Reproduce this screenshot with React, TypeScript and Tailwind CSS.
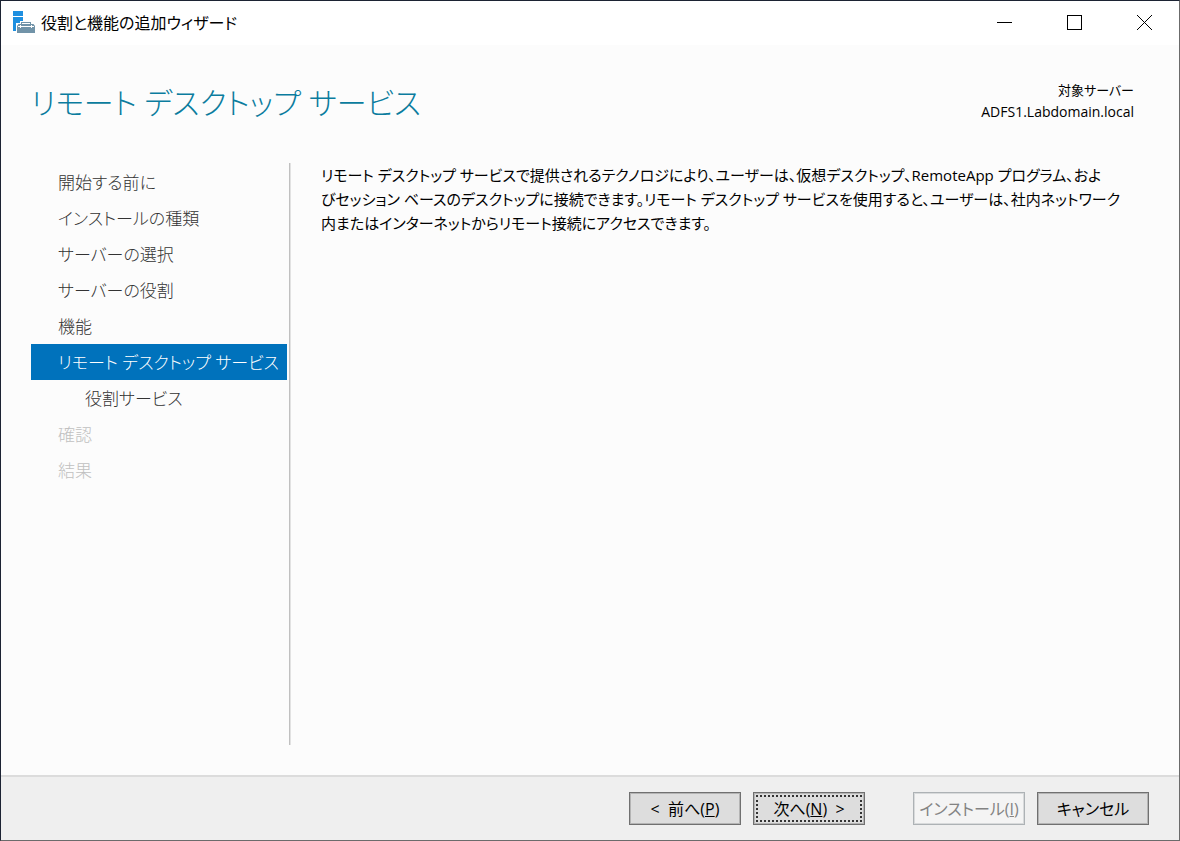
import type { ReactNode } from "react";

const steps = [
  { label: "開始する前に", style: "pl-[27px] text-[#333333]" },
  { label: "インストールの種類", style: "pl-[27px] text-[#333333]" },
  { label: "サーバーの選択", style: "pl-[27px] text-[#333333]" },
  { label: "サーバーの役割", style: "pl-[27px] text-[#333333]" },
  { label: "機能", style: "pl-[27px] text-[#333333]" },
  { label: "リモート デスクトップ サービス", style: "pl-[27px] bg-[#0072bc] text-white", current: true },
  { label: "役割サービス", style: "pl-[54px] text-[#333333]" },
  { label: "確認", style: "pl-[27px] text-[#c0c0c0]", disabled: true },
  { label: "結果", style: "pl-[27px] text-[#c0c0c0]", disabled: true },
];

function ServerIcon() {
  return (
    <svg width="24" height="24" viewBox="0 0 24 24" aria-hidden="true">
      <path fill="#1e8fe0" d="M1 0h10v5H1zM1 6h10v4H8v2H4v8H1z" />
      <path fill="#7193a8" d="M9 11h10v2h-1v-1h-8v1H9zM6.5 13h15L23 15v7H5v-7z" />
      <path fill="none" stroke="#fff" d="M6 15.5h16M8.5 14v3M19.5 14v3" />
    </svg>
  );
}

function FooterButton({ children, disabled, focused }: { children: ReactNode; disabled?: boolean; focused?: boolean }) {
  return (
    <button
      type="button"
      disabled={disabled}
      className="h-[33px] w-28 border border-[#707070] bg-[#dddddd] p-[2px] text-base text-black shadow-[inset_0_0_0_1px_#b4b4b4] disabled:border-[#adb2b5] disabled:bg-[#f4f4f4] disabled:text-[#838383] disabled:shadow-[inset_0_0_0_1px_#d8dadb]"
    >
      <span
        className={
          focused
            ? "flex h-full items-center justify-center border-2 border-dotted border-[#333333] whitespace-pre"
            : "flex h-full items-center justify-center whitespace-pre"
        }
      >
        {children}
      </span>
    </button>
  );
}

export default function App() {
  return (
    <div className="flex min-h-screen flex-col border border-t-[#1c2333] border-r-[#6b6b6b] border-b-[#6b6b6b] border-l-[#1c2333] bg-[#fcfcfc] font-['Open_Sans','Noto_Sans_CJK_JP',sans-serif] text-black [font-feature-settings:'palt']">
      <header className="flex h-11 shrink-0 items-center bg-white pl-[11px]">
        <ServerIcon />
        <span className="ml-[5px] text-base">役割と機能の追加ウィザード</span>
        <div className="ml-auto flex h-full pb-px">
          <button type="button" aria-label="最小化" className="flex w-[70px] items-center justify-center">
            <svg width="15" height="15" viewBox="0 0 15 15" shapeRendering="crispEdges">
              <path d="M0 7.5h15" stroke="black" />
            </svg>
          </button>
          <button type="button" aria-label="最大化" className="flex w-[70px] items-center justify-center">
            <svg width="15" height="15" viewBox="0 0 15 15" shapeRendering="crispEdges">
              <rect x="0.5" y="0.5" width="14" height="14" fill="none" stroke="black" />
            </svg>
          </button>
          <button type="button" aria-label="閉じる" className="flex w-[70px] items-center justify-center">
            <svg width="15" height="15" viewBox="0 0 15 15">
              <path d="M0 0l15 15M15 0L0 15" stroke="black" />
            </svg>
          </button>
        </div>
      </header>

      <div className="flex items-start justify-between pt-[34px] pr-[45px] pl-[30px]">
        <h1 className="text-[30px] leading-[48px] font-light text-[#0b7c9e]">リモート デスクトップ サービス</h1>
        <div className="pt-px text-right leading-[21px]">
          <p className="text-[13px]">対象サーバー</p>
          <p className="text-sm leading-[21px]">ADFS1.Labdomain.local</p>
        </div>
      </div>

      <main className="flex flex-1 pt-9 pb-[30px] pl-[30px]">
        <nav className="w-[259px] shrink-0 border-r border-[#c0c0c0] pr-[2px] shadow-[1px_0_#e2e2e2]">
          <ul className="pt-px">
            {steps.map((step) => (
              <li key={step.label}>
                <button
                  type="button"
                  disabled={step.disabled}
                  aria-current={step.current ? "step" : undefined}
                  className={`block h-9 w-full text-left text-[17px] leading-[38px] font-light whitespace-nowrap ${step.style}`}
                >
                  {step.label}
                </button>
              </li>
            ))}
          </ul>
        </nav>
        <p className="pl-[31px] text-[15px] leading-6 whitespace-nowrap">
          リモート デスクトップ サービスで提供されるテクノロジにより、ユーザーは、仮想デスクトップ、RemoteApp プログラム、およ
          <br />
          びセッション ベースのデスクトップに接続できます。リモート デスクトップ サービスを使用すると、ユーザーは、社内ネットワーク
          <br />
          内またはインターネットからリモート接続にアクセスできます。
        </p>
      </main>

      <footer className="flex h-[65px] shrink-0 items-center justify-end border-t-2 border-[#dcdcdc] bg-[#efefef] pr-[30px]">
        <FooterButton>
          {"<  前へ("}<u>P</u>{")"}
        </FooterButton>
        <div className="mr-12 ml-3">
          <FooterButton focused>
            {"次へ("}<u>N</u>{")  >"}
          </FooterButton>
        </div>
        <div className="mr-3">
          <FooterButton disabled>
            {"インストール("}<u>I</u>{")"}
          </FooterButton>
        </div>
        <FooterButton>キャンセル</FooterButton>
      </footer>
    </div>
  );
}
